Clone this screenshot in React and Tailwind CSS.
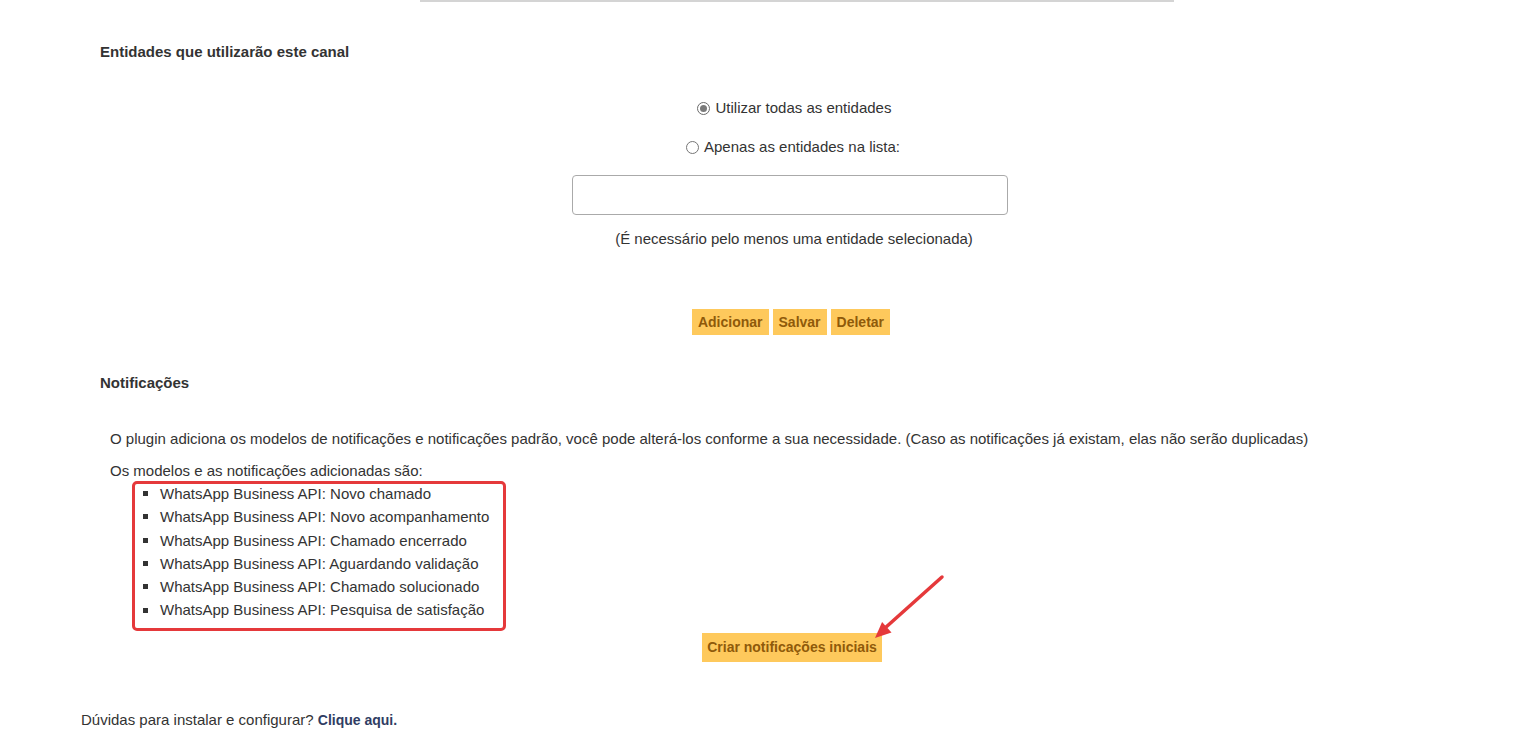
import React from "react";

const ITEMS = [
  "WhatsApp Business API: Novo chamado",
  "WhatsApp Business API: Novo acompanhamento",
  "WhatsApp Business API: Chamado encerrado",
  "WhatsApp Business API: Aguardando validação",
  "WhatsApp Business API: Chamado solucionado",
  "WhatsApp Business API: Pesquisa de satisfação",
];

function Radio({ checked }) {
  return (
    <span
      className={`flex items-center justify-center w-[13px] h-[13px] rounded-full border ${
        checked ? "border-[#6b6b6b]" : "border-[#767676]"
      } bg-white`}
    >
      {checked && <span className="w-[7px] h-[7px] rounded-full bg-[#7a7a7a]" />}
    </span>
  );
}

function YellowButton({ children, className = "" }) {
  return (
    <button
      className={`bg-[#fec95c] text-[#8f5a0a] font-bold text-[14px] px-[6px] leading-none ${className}`}
    >
      {children}
    </button>
  );
}

export default function App() {
  return (
    <div
      className="relative w-[1522px] h-[755px] bg-white text-[#333] text-[15px] overflow-hidden"
      style={{ fontFamily: '"Liberation Sans", Arial, sans-serif' }}
    >
      {/* top separator */}
      <div className="ml-[420px] w-[754px] h-[2px] bg-[#d4d4d4]" />

      <div className="ml-[100px] w-[1380px]">
        {/* Entidades */}
        <h2 className="mt-[40px] font-bold leading-[20px]">
          Entidades que utilizarão este canal
        </h2>

        <div className="flex flex-col items-center">
          <label className="mt-[36px] flex items-center gap-[6px] leading-[20px] pl-[8px]">
            <Radio checked />
            <span>Utilizar todas as entidades</span>
          </label>
          <label className="mt-[19px] flex items-center gap-[5px] leading-[20px] pl-[6px]">
            <Radio />
            <span>Apenas as entidades na lista:</span>
          </label>
          <div className="mt-[18px] w-[436px] h-[40px] border border-[#aaa] rounded-[4px] bg-white" />
          <p className="mt-[14px] leading-[20px] pl-[8px]">
            (É necessário pelo menos uma entidade selecionada)
          </p>

          <div className="mt-[60px] flex gap-[4px] h-[26px] pl-[2px]">
            <YellowButton>Adicionar</YellowButton>
            <YellowButton>Salvar</YellowButton>
            <YellowButton>Deletar</YellowButton>
          </div>
        </div>

        {/* Notificações */}
        <h2 className="mt-[38px] font-bold leading-[20px]">Notificações</h2>

        <p className="mt-[36px] ml-[10px] leading-[20px]">
          O plugin adiciona os modelos de notificações e notificações padrão, você pode alterá-los conforme a sua necessidade. (Caso as notificações já existam, elas não serão duplicadas)
        </p>
        <p className="mt-[12px] ml-[10px] leading-[20px]">
          Os modelos e as notificações adicionadas são:
        </p>

        <div className="relative">
          <ul className="pt-[1px] ml-[43px]">
            {ITEMS.map((item) => (
              <li key={item} className="flex items-center leading-[23.3px]">
                <span className="w-[5px] h-[5px] bg-[#333] mr-[12px]" />
                <span>{item}</span>
              </li>
            ))}
          </ul>
          {/* annotation box */}
          <div className="absolute left-[32px] top-0 w-[374px] h-[150px] border-[3px] border-[#e5393b] rounded-[5px] pointer-events-none" />
        </div>

        <div className="mt-[11px] flex justify-center">
          <YellowButton className="h-[29px] !px-[5px] ml-[4px]">Criar notificações iniciais</YellowButton>
        </div>
      </div>

      <p className="mt-[48px] ml-[81px] leading-[20px]">
        Dúvidas para instalar e configurar?{" "}
        <a className="font-bold text-[#2f3d63] text-[14px]">Clique aqui.</a>
      </p>

      {/* annotation arrow */}
      <svg
        className="absolute left-0 top-0 pointer-events-none"
        width="1522"
        height="755"
      >
        <line x1="942" y1="577" x2="885" y2="628" stroke="#e5393b" strokeWidth="3.5" strokeLinecap="round" />
        <polygon points="875,638 891.5,632.5 882.1,622.1" fill="#e5393b" />
      </svg>
    </div>
  );
}
